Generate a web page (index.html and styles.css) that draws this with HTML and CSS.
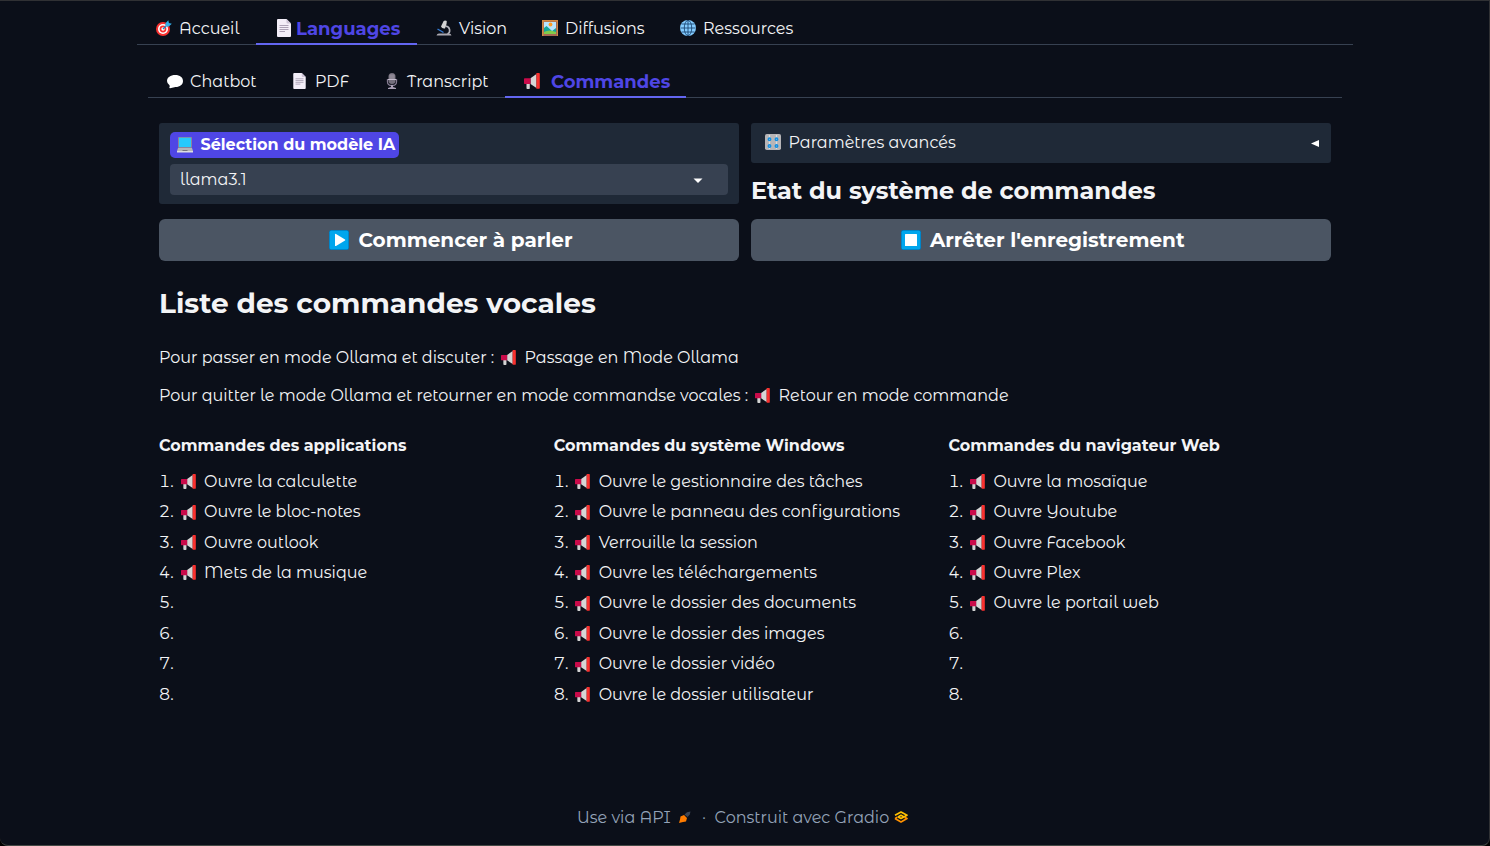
FILE: index.html
```
<!DOCTYPE html>
<html lang="fr">
<head>
<meta charset="utf-8">
<title>Commandes vocales</title>
<link rel="stylesheet" href="styles.css">
</head>
<body>
<svg class="defs" width="0" height="0">
  <symbol id="horn" viewBox="0 0 16 16"><path d="M2.500 10h3.300v5.200a.8.8 0 0 1-.8.8H3.300a.8.8 0 0 1-.8-.8z" fill="#d3d3d3"/><path d="M6.500 5.300 12.500 1v14L6.500 11z" fill="#d6d6d6"/><path d="M.7 5.300h5.900V11H.7a.7.7 0 0 1-.7-.7V6a.7.7 0 0 1 .7-.7z" fill="#ca0b4a"/><path d="M12.400 0h2.400c.7 0 1 .5 1 1v13.800c0 .6-.4 1-1 1h-2.400z" fill="#f8312f"/></symbol>
  <symbol id="page" viewBox="0 0 14 18"><path d="M1 0h8.500L14 4.500V17q0 1-1 1H1q-1 0-1-1V1q0-1 1-1z" fill="#f3eef8"/><path d="M9.500 0 14 4.500h-3.500q-1 0-1-1z" fill="#cdc4d6"/><path d="M2.500 6.500h9M2.500 8.500h9M2.500 10.500h9M2.500 12.500h5.500" stroke="#998ea4" stroke-width=".8"/></symbol>
</svg>
<main class="app">
  <nav class="tabs">
    <span class="tab t-accueil"><svg class="ico" viewBox="0 0 16 16"><circle cx="7" cy="9" r="7" fill="#f8312f"/><circle cx="7" cy="9" r="5" fill="#fff"/><circle cx="7" cy="9" r="3.400" fill="#f8312f"/><circle cx="7" cy="9" r="1.700" fill="#fff"/><path d="M7 9l6-6" stroke="#1685c9" stroke-width="1.300"/><path d="M9.500 6.500V3.300L12.300.3l.6 2.800 2.900.6-3 2.900z" fill="#32aee8"/></svg><b class="txt">Accueil</b></span>
    <span class="tab t-lang active"><svg class="ico-page big"><use href="#page"/></svg><b class="txt">Languages</b></span>
    <span class="tab t-vision"><svg class="ico" viewBox="0 0 16 16"><path d="M9.500 6c5 .5 5.300 6.500 2 8" fill="none" stroke="#b5b5bd" stroke-width="1.600"/><path d="M5 6.500 7.500 1.300Q8.800-.3 10.800 1L10.500 4 9 8.500Q6 9 5 6.500z" fill="#d3d3d3"/><path d="m1.500 9 6 3.500" stroke="#347bd4" stroke-width="1.400"/><path d="M.5 15.500q.5-2 2.500-2h10q2 0 2.500 2z" fill="#aaa8b0"/></svg><b class="txt">Vision</b></span>
    <span class="tab t-diff"><svg class="ico" viewBox="0 0 16 16"><rect width="16" height="16" rx=".8" fill="#a56953"/><path d="M0 0h16v16h-1V1.500H1.500V16H0z" fill="#d28b45"/><path d="M2 2h12v12H2z" fill="#b8e6ff"/><circle cx="8.500" cy="4.500" r="1.900" fill="#ff9e25"/><path d="m2 8 2.500-2L10 11l4-3v6H2z" fill="#15a69a"/><path d="M2 12q5-3 12 0v2H2z" fill="#83cb4a"/></svg><b class="txt">Diffusions</b></span>
    <span class="tab t-res"><svg class="ico" viewBox="0 0 16 16"><circle cx="8" cy="8" r="8" fill="#83cbff"/><g fill="none" stroke="#153e68" stroke-width=".8"><ellipse cx="8" cy="8" rx="3.700" ry="7.600"/><path d="M8 0v16M.5 8h15M1.500 4h13M1.500 12h13"/></g></svg><b class="txt">Ressources</b></span>
  </nav>
  <nav class="tabs sub">
    <span class="tab t-chat"><svg class="ico" viewBox="0 0 16 16"><path d="M8.200 2C13 2 16 4.400 16 7.900s-3 6-7.500 6L3 15.200Q1.700 15.300 2.800 13L2.300 12Q0 10.300 0 8C0 4.500 3.500 2 8.200 2z" fill="#fff"/></svg><b class="txt">Chatbot</b></span>
    <span class="tab t-pdf"><svg class="ico-page"><use href="#page"/></svg><b class="txt">PDF</b></span>
    <span class="tab t-trans"><svg class="ico" viewBox="0 0 16 16"><path d="M3.500 6v3q0 3.500 4.500 3.500T12.500 9V6" fill="none" stroke="#847a90" stroke-width="1.300"/><path d="M7 12h2v2l3 1v1H4v-1l3-1z" fill="#aaa0b5"/><rect x="4.500" y="0" width="7" height="11" rx="3.500" fill="#75707d"/><path d="M5 3h6M5 5h6M7 1v5M9 1v5" stroke="#aaa3b0" stroke-width=".6"/><path d="M4 6.500h8" stroke="#c5bdce" stroke-width="1"/></svg><b class="txt">Transcript</b></span>
    <span class="tab t-cmd active"><svg class="ico horn-lg"><use href="#horn"/></svg><b class="txt">Commandes</b></span>
  </nav>
  <section class="grid">
    <div class="panel">
      <div class="label"><svg class="ico" viewBox="0 0 16 16"><rect x="1" y="0" width="14" height="11" rx=".8" fill="#8b849b"/><path d="M2 .8h12V10H2z" fill="#26c9fc"/><path d="M1 11h14l1 3H0z" fill="#b5b5b8"/><path d="M0 14h16v1.500H0z" fill="#dedee1"/><path d="M5.500 13h5v1h-5z" fill="#77747c"/></svg><b class="txt">Sélection du modèle IA</b></div>
      <div class="select"><span class="txt">llama3.1</span><svg class="caret" viewBox="0 0 10 6"><path d="M.5.500h9L5 5z" fill="#fff"/></svg></div>
    </div>
    <div class="side">
      <div class="accordion"><svg class="ico" viewBox="0 0 16 16"><rect width="16" height="16" rx="1.800" fill="#b7b5b7"/><path d="M4.500 1v14M11.500 1v14" stroke="#dddde0" stroke-width="1.200"/><g fill="#dddde0" stroke="#118fe2" stroke-width="1.500"><circle cx="4.500" cy="5.300" r="1.200"/><circle cx="11.500" cy="5.300" r="1.200"/><circle cx="4.500" cy="12" r="1.200"/><circle cx="11.500" cy="12" r="1.200"/></g></svg><span class="txt">Paramètres avancés</span><svg class="arrow" viewBox="0 0 8 7"><path d="M0 3.500 8 0v7z" fill="#fff"/></svg></div>
      <h2>Etat du système de commandes</h2>
    </div>
    <div class="button play"><svg class="square" viewBox="0 0 20 20"><rect width="20" height="20" rx="2" fill="#0078b9"/><rect x=".7" y=".7" width="18.600" height="18.600" rx="1.500" fill="#00a6ed"/><path d="M6 4.500q0-1 1-.5l9 5.500q.6.500 0 1L7 16q-1 .4-1-.6z" fill="#fff"/></svg><span>Commencer à parler</span></div>
    <div class="button stop"><svg class="square" viewBox="0 0 20 20"><rect width="20" height="20" rx="2" fill="#0078b9"/><rect x=".7" y=".7" width="18.600" height="18.600" rx="1.500" fill="#00a6ed"/><rect x="4" y="4" width="12" height="12" rx=".6" fill="#fff"/></svg><span>Arrêter l'enregistrement</span></div>
  </section>
  <h1>Liste des commandes vocales</h1>
  <p class="line"><span class="txt p1">Pour passer en mode Ollama et discuter :</span><svg class="horn"><use href="#horn"/></svg><span class="txt">Passage en Mode Ollama</span></p>
  <p class="line"><span class="txt p2">Pour quitter le mode Ollama et retourner en mode commandse vocales :</span><svg class="horn"><use href="#horn"/></svg><span class="txt">Retour en mode commande</span></p>
  <section class="columns">
    <div><h3>Commandes des applications</h3>
      <ul>
        <li><i>1.</i><svg class="horn"><use href="#horn"/></svg><span>Ouvre la calculette</span></li>
        <li><i>2.</i><svg class="horn"><use href="#horn"/></svg><span>Ouvre le bloc-notes</span></li>
        <li><i>3.</i><svg class="horn"><use href="#horn"/></svg><span>Ouvre outlook</span></li>
        <li><i>4.</i><svg class="horn"><use href="#horn"/></svg><span>Mets de la musique</span></li>
        <li><i>5.</i></li><li><i>6.</i></li><li><i>7.</i></li><li><i>8.</i></li>
      </ul></div>
    <div><h3>Commandes du système Windows</h3>
      <ul>
        <li><i>1.</i><svg class="horn"><use href="#horn"/></svg><span>Ouvre le gestionnaire des tâches</span></li>
        <li><i>2.</i><svg class="horn"><use href="#horn"/></svg><span>Ouvre le panneau des configurations</span></li>
        <li><i>3.</i><svg class="horn"><use href="#horn"/></svg><span>Verrouille la session</span></li>
        <li><i>4.</i><svg class="horn"><use href="#horn"/></svg><span>Ouvre les téléchargements</span></li>
        <li><i>5.</i><svg class="horn"><use href="#horn"/></svg><span>Ouvre le dossier des documents</span></li>
        <li><i>6.</i><svg class="horn"><use href="#horn"/></svg><span>Ouvre le dossier des images</span></li>
        <li><i>7.</i><svg class="horn"><use href="#horn"/></svg><span>Ouvre le dossier vidéo</span></li>
        <li><i>8.</i><svg class="horn"><use href="#horn"/></svg><span>Ouvre le dossier utilisateur</span></li>
      </ul></div>
    <div><h3>Commandes du navigateur Web</h3>
      <ul>
        <li><i>1.</i><svg class="horn"><use href="#horn"/></svg><span>Ouvre la mosaïque</span></li>
        <li><i>2.</i><svg class="horn"><use href="#horn"/></svg><span>Ouvre Youtube</span></li>
        <li><i>3.</i><svg class="horn"><use href="#horn"/></svg><span>Ouvre Facebook</span></li>
        <li><i>4.</i><svg class="horn"><use href="#horn"/></svg><span>Ouvre Plex</span></li>
        <li><i>5.</i><svg class="horn"><use href="#horn"/></svg><span>Ouvre le portail web</span></li>
        <li><i>6.</i></li><li><i>7.</i></li><li><i>8.</i></li>
      </ul></div>
  </section>
  <footer><span class="api">Use via API</span><svg class="rocket" viewBox="0 0 12 12"><path d="M5.500 3.500 8 1.300 11.500.5l-.7 3L8.500 6z" fill="#3d4656"/><path d="M1.500 5.500 5 4 8 7 7 10.500 4 11 0 12l1-3.500z" fill="#ff7c00"/></svg><span class="dot">·</span><span class="built">Construit avec Gradio</span><svg class="gradio" viewBox="0 0 14 12"><g fill="none" stroke-width="1.700" stroke-linejoin="round"><path d="M1 4.200 7 1l6 3.200-6 3.300-2.800-1.600L7 4.300l2.600 1.400" stroke="#ffc000"/><path d="M1 7.600 7 11l6-3.400-2.500-1.400M1 7.600l2.200-1.400" stroke="#ff9100"/></g></svg></footer>
</main>
</body>
</html>
```
FILE: styles.css
```
* { box-sizing: border-box; margin: 0; padding: 0; }
html { background: #000; }
body {
  height: 846px;
  overflow: hidden;
  background: #0b0f19;
  border: 1px solid #303134;
  border-left: 0;
  border-bottom-color: #444945;
  border-radius: 0 0 8px 8px;
  color: #f3f4f6;
  font: 16px/24px "Montserrat Alternates", Montserrat, Inter, sans-serif;
}
svg { display: block; flex: none; }
.defs { position: absolute; }
.app { width: 1216px; margin-left: 137px; padding-top: 10px; display: flex; flex-direction: column; }
b { font-weight: 400; }
span, b, i { white-space: nowrap; }
.tabs { display: flex; height: 34px; border-bottom: 1px solid #374151; }
.tabs.sub { margin: 19px 11px 0; }
.tab { display: flex; align-items: center; gap: 8px; height: 34px; padding: 0 0 0 19px; }
.tab b, .accordion .txt, .line .txt, footer span { padding-top: 2px; }
.tab.active { padding-top: 2px; border-bottom: 2px solid #6366f1; color: #4f46e5; font-size: 18px; }
.tab.active b, .label b, h1, h2, h3, .button { font-family: Montserrat, Inter, sans-serif; font-weight: 700; }
.ico { width: 16px; height: 16px; }
.ico-page { width: 13px; height: 16px; margin-left: 1px; }
.ico-page.big { width: 14px; height: 18px; }
.t-accueil { width: 119px; gap: 7px; }
.tab.t-lang { width: 161px; padding-left: 20px; gap: 5px; }
.t-vision { width: 106px; gap: 7px; }
.t-diff { width: 138px; gap: 7px; }
.t-res { gap: 7px; }
.t-chat { width: 125px; gap: 7px; }
.t-pdf { width: 92px; gap: 9px; }
.t-trans { width: 140px; gap: 7px; }
.tab.t-cmd { width: 181px; padding-left: 18px; gap: 10px; }
.horn-lg { width: 18px; height: 16px; }
.grid { display: grid; grid-template-columns: 580px 580px; column-gap: 12px; row-gap: 15px; padding: 25px 22px 0; grid-template-rows: 81px 42px; }
.panel { background: #1f2937; border-radius: 3px; padding: 9px 11px; }
.label { width: 229px; height: 26px; display: flex; align-items: center; gap: 7.500px; padding-left: 7px; background: #4f46e5; border-radius: 5px; color: #fff; }
.select { margin-top: 6px; height: 31px; padding: 0 25px 0 10px; display: flex; justify-content: space-between; align-items: center; background: #374151; border-radius: 4px; }
.caret { width: 10px; height: 6px; margin-top: 3px; }
.accordion { height: 40px; display: flex; align-items: center; gap: 7.500px; padding: 0 12px 2px 14px; background: #1f2937; border-radius: 3px; }
.arrow { width: 8px; height: 7px; margin: 3px 0 0 auto; }
h1, h2, h3 { white-space: nowrap; }
h2 { font-size: 24px; line-height: 32px; margin-top: 12px; }
.button { display: flex; justify-content: flex-start; align-items: center; gap: 9.500px; background: #4b5563; border-radius: 6px; color: #fff; font-size: 20px; }
.play { padding-left: 170px; }
.stop { padding-left: 149.500px; }
.square { width: 20px; height: 20px; }
h1 { font-size: 28px; line-height: 36px; margin: 24px 0 0 22px; }
.line { display: flex; align-items: center; height: 24px; margin: 24px 0 0 22px; }
.line + .line { margin-top: 14px; }
.horn { width: 15px; height: 15px; margin-right: 8.500px; }
.p1 { width: 342px; }
.p2 { width: 596px; }
.columns { display: grid; grid-template-columns: 394.700px 394.700px 380px; margin: 27px 0 0 22px; }
h3 { font-size: 16px; line-height: 24px; margin-bottom: 8.600px; }
ul { list-style: none; }
li { display: flex; align-items: center; height: 30.400px; }
i { width: 21.500px; font-style: normal; font-variant-numeric: tabular-nums; }
footer { display: flex; align-items: center; height: 24px; margin: 95px 0 0 440px; color: #94a3b8; }
.api { width: 102px; }
.rocket { width: 12px; height: 12px; }
.dot { margin-left: 11px; width: 12.500px; }
.built { width: 179.500px; }
.gradio { width: 14px; height: 12px; }
```
